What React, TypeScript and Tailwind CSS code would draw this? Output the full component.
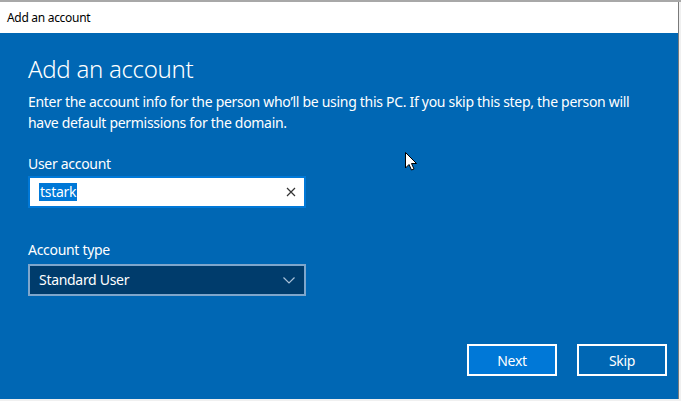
import React from "react";

const font = { fontFamily: '"Noto Sans", "Segoe UI", sans-serif' };

const App: React.FC = () => {
  return (
    <div
      className="relative w-[681px] h-[401px] overflow-hidden bg-[#f0f0f0] border-t-2 border-[#a8a8a8] tracking-[-0.3px]"
      style={font}
    >
      <div className="flex h-[397px] w-[679px] flex-col border-r border-[#7a7a7a]">
        {/* title bar */}
        <div className="flex h-[31px] items-center bg-white pl-[7px] text-[12px] text-black">
          Add an account
        </div>

        {/* dialog body */}
        <div className="flex flex-1 flex-col bg-[#0067b4] px-[28px] text-white">
          <h1 className="mt-[20px] text-[24px] font-light leading-[32px]">Add an account</h1>
          <p className="mt-[6px] text-[14px] leading-[21px]">
            Enter the account info for the person who’ll be using this PC. If you skip this step, the person will
            have default permissions for the domain.
          </p>

          <label className="mt-[21px] text-[14px] leading-[20px]">User account</label>
          <div className="mt-[2px] flex h-[32px] w-[278px] items-center border-2 border-[#0078d7] bg-white pl-[9px] pr-[8px]">
            <span className="bg-[#0078d7] px-[1px] text-[14px] leading-[18px] text-white">tstark</span>
            <svg className="ml-auto h-[10px] w-[10px]" viewBox="0 0 10 10" fill="none" stroke="#333" strokeWidth="1.2">
              <path d="M1 1L9 9M9 1L1 9" />
            </svg>
          </div>

          <label className="mt-[32px] text-[14px] leading-[20px]">Account type</label>
          <div className="mt-[4px] flex h-[32px] w-[278px] items-center border-2 border-[#7ea6cc] bg-[#003c6c] pl-[9px] pr-[9px]">
            <span className="text-[14px] leading-[18px] text-white">Standard User</span>
            <svg className="ml-auto h-[7px] w-[12px]" viewBox="0 0 12 7" fill="none" stroke="#a9c1d8" strokeWidth="1.2">
              <path d="M0.5 0.5L6 6L11.5 0.5" />
            </svg>
          </div>

          <div className="mt-auto mb-[23px] mr-[-17px] flex justify-end gap-[20px]">
            <button className="h-[32px] w-[90px] border-2 border-white bg-[#0078d7] text-[14px] text-white">
              Next
            </button>
            <button className="h-[32px] w-[90px] border-2 border-white bg-[#0067b4] text-[14px] text-white">
              Skip
            </button>
          </div>
        </div>
      </div>

      {/* mouse pointer */}
      <svg className="absolute left-[405px] top-[150px] h-[19px] w-[12px]" viewBox="0 0 12 19">
        <path d="M0.5 0.5V16L4 12.5L6.5 18L9 17L6.5 11.5H11.5Z" fill="white" stroke="black" strokeWidth="1" />
      </svg>
    </div>
  );
};

export default App;
